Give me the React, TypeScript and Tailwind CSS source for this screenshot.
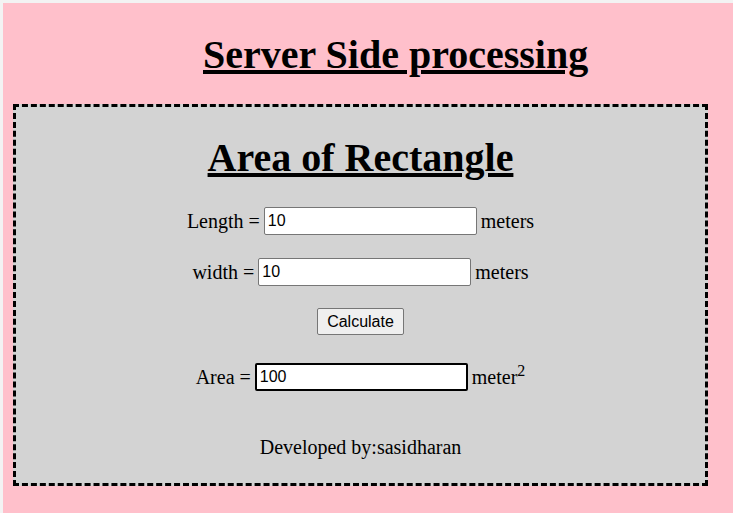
import React from 'react';

const serif = "font-['Liberation_Serif','Times_New_Roman',serif]";
const sans = "font-['Liberation_Sans',Arial,sans-serif]";

const Field: React.FC<{ value: string; focused?: boolean }> = ({ value, focused }) => (
  <input
    readOnly
    value={value}
    className={`${sans} w-[213px] h-[28px] px-[3px] text-[16px] text-black bg-white rounded-[2px] outline-none ${
      focused ? 'border-2 border-black' : 'border border-[#767676]'
    }`}
  />
);

const App: React.FC = () => {
  return (
    <div className={`${serif} w-[733px] h-[513px] bg-[#f3f3f3] pt-[3px] pl-[3px] overflow-hidden`}>
      <div className="h-full bg-[#ffc0cb] text-black">
        <h1 className="pt-[29px] pl-[200px] text-[40px] leading-[46px] font-bold underline">
          Server Side processing
        </h1>
        <div className="mt-[26px] ml-[10px] w-[695px] h-[382px] bg-[#d3d3d3] border-[3px] border-dashed border-black flex flex-col items-center">
          <h2 className="mt-[28px] text-[40px] leading-[46px] font-bold underline">Area of Rectangle</h2>
          <div className="mt-[25px] flex items-center gap-[4px] text-[20px]">
            <span>Length =</span>
            <Field value="10" />
            <span>meters</span>
          </div>
          <div className="mt-[21px] flex items-center gap-[4px] text-[20px]">
            <span>width =</span>
            <Field value="10" />
            <span>meters</span>
          </div>
          <button
            className={`${sans} mt-[21px] h-[27px] px-[9px] text-[16px] bg-[#efefef] border border-[#767676] rounded-[2px]`}
          >
            Calculate
          </button>
          <div className="mt-[27px] flex items-center gap-[4px] text-[20px]">
            <span>Area =</span>
            <Field value="100" focused />
            <span>
              meter<sup className="text-[16px]">2</sup>
            </span>
          </div>
          <p className="mt-[40px] text-[20px]">Developed by:sasidharan</p>
        </div>
      </div>
    </div>
  );
};

export default App;
